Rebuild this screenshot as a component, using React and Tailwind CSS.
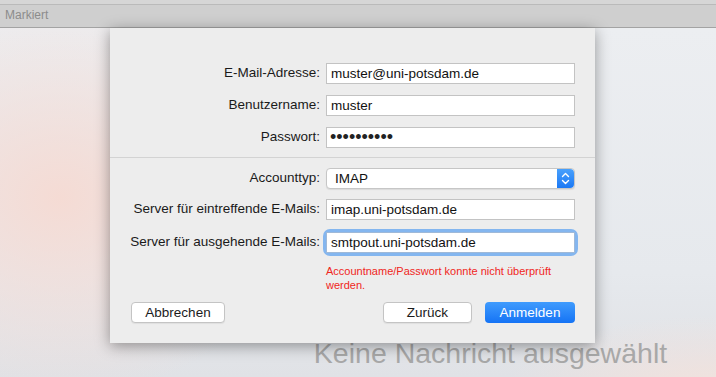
import React from 'react';

const font = { fontFamily: '"Liberation Sans", Arial, sans-serif' };

function Row({ label, children }) {
  return (
    <div className="flex items-center">
      <div className="w-[210px] pr-0 text-right text-[13.5px] text-[#1a1a1a]">{label}</div>
      <div className="ml-[6px] w-[249px]">{children}</div>
    </div>
  );
}

function TextField({ value, focused }) {
  if (focused) {
    return (
      <div className="rounded-[4px] ring-[3px] ring-[#84b6ef]">
        <div className="h-[21px] border border-[#9fb9d8] bg-white pl-[4px] text-[13.5px] leading-[19px] text-[#111]">
          {value}
        </div>
      </div>
    );
  }
  return (
    <div className="h-[21px] border border-[#c3c3c3] bg-white pl-[4px] text-[13.5px] leading-[19px] text-[#111]">
      {value}
    </div>
  );
}

function Stepper() {
  return (
    <div className="flex h-full w-[17px] items-center justify-center rounded-r-[4px] bg-gradient-to-b from-[#48a0fc] to-[#1a78f4]">
      <svg width="9" height="13" viewBox="0 0 9 13" fill="none" stroke="white" strokeWidth="1.4" strokeLinecap="round" strokeLinejoin="round">
        <path d="M1.5 4.5 L4.5 1.5 L7.5 4.5" />
        <path d="M1.5 8.5 L4.5 11.5 L7.5 8.5" />
      </svg>
    </div>
  );
}

export default function App() {
  return (
    <div style={font} className="relative h-[377px] w-[716px] overflow-hidden bg-[#e9ebee]">
      {/* toolbar */}
      <div className="h-[28px] border-b border-[#a3a3a3] bg-[#cfcfcf]">
        <div className="h-[5px] border-b border-[#bababa] bg-[#d6d6d6]" />
        <div className="pl-[5px] pt-[3px] text-[12px] leading-[15px] text-[#8c8c8c]">Markiert</div>
      </div>

      {/* window content */}
      <div className="flex h-[349px] bg-[radial-gradient(ellipse_240px_200px_at_60px_170px,#f5dbd4_0%,rgba(245,219,212,0)_100%),radial-gradient(ellipse_220px_90px_at_716px_377px,#f6e2db_0%,rgba(246,226,219,0)_100%),linear-gradient(180deg,#eceef1_0%,#e6e9ed_70%,#e0e2e6_100%)]">
        <div className="w-[265px]" />
        <div className="flex flex-1 items-end justify-center pb-[8px]">
          <div className="text-[28.5px] leading-[32px] text-[#a8a8a8]">Keine Nachricht ausgewählt</div>
        </div>
      </div>

      {/* sheet */}
      <div className="absolute left-[110px] top-[28px] w-[485px] bg-[#ededed] pb-[20px] pt-[35px] shadow-[0_3px_14px_rgba(0,0,0,0.38)]">
        <div className="flex flex-col gap-[11px]">
          <Row label="E-Mail-Adresse:">
            <TextField value="muster@uni-potsdam.de" />
          </Row>
          <Row label="Benutzername:">
            <TextField value="muster" />
          </Row>
          <Row label="Passwort:">
            <div className="h-[21px] overflow-hidden border border-[#c3c3c3] bg-white pl-[3px] text-[18px] leading-[18px] text-[#222]">
              ••••••••••
            </div>
          </Row>
        </div>

        <div className="mb-[10px] mt-[9px] border-t border-[#d3d3d3]" />

        <div className="flex flex-col">
          <Row label="Accounttyp:">
            <div className="flex h-[21px] items-stretch rounded-[4px] border border-[#c6c6c6] bg-white shadow-[0_1px_1px_rgba(0,0,0,0.08)]">
              <div className="flex-1 pl-[8px] text-[13.5px] leading-[19px] text-[#111]">IMAP</div>
              <Stepper />
            </div>
          </Row>
          <div className="mt-[10px]">
            <Row label="Server für eintreffende E-Mails:">
              <TextField value="imap.uni-potsdam.de" />
            </Row>
          </div>
          <div className="mt-[12px]">
            <Row label="Server für ausgehende E-Mails:">
              <TextField value="smtpout.uni-potsdam.de" focused />
            </Row>
          </div>
          <div className="ml-[216px] mt-[11px] w-[250px] text-[11px] leading-[14px] text-[#f0261c]">
            Accountname/Passwort konnte nicht überprüft werden.
          </div>
        </div>

        <div className="mt-[10px] flex items-center pl-[21px] pr-[20px]">
          <button className="h-[21px] w-[94px] rounded-[4px] border border-[#c4c4c4] bg-white text-[13.5px] leading-[19px] text-[#1b1b1b] shadow-[0_1px_1px_rgba(0,0,0,0.06)]">
            Abbrechen
          </button>
          <div className="flex-1" />
          <button className="h-[21px] w-[89px] rounded-[4px] border border-[#c4c4c4] bg-white text-[13.5px] leading-[19px] text-[#1b1b1b] shadow-[0_1px_1px_rgba(0,0,0,0.06)]">
            Zurück
          </button>
          <button className="ml-[13px] h-[21px] w-[90px] rounded-[4px] bg-gradient-to-b from-[#3f9bfd] to-[#1473f5] text-[13.5px] leading-[21px] text-white">
            Anmelden
          </button>
        </div>
      </div>
    </div>
  );
}
